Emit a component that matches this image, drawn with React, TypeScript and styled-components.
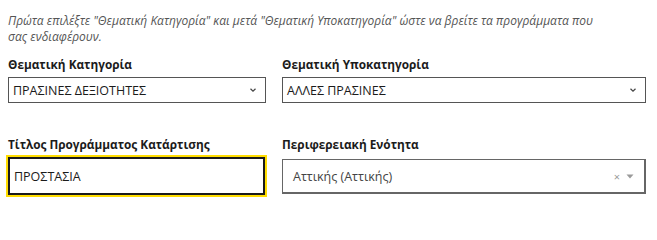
import styled, { createGlobalStyle } from 'styled-components'

const GlobalStyle = createGlobalStyle`
  body {
    margin: 0;
    background: #ffffff;
    font-family: 'Open Sans', 'Noto Sans', sans-serif;
    color: #1b1b1b;
  }
`

const Page = styled.div`
  padding: 8px 11px 0 8px;
`

const Hint = styled.p`
  margin: 5px 0 0;
  max-width: 590px;
  font-size: 12px;
  line-height: 16px;
  font-style: italic;
  color: #555555;
`

const Grid = styled.div`
  display: grid;
  grid-template-columns: 258px 1fr;
  column-gap: 16px;
  row-gap: 33px;
  margin-top: 11px;
`

const Field = styled.div`
  display: flex;
  flex-direction: column;
`

const Label = styled.label`
  font-size: 11.8px;
  font-weight: 700;
  line-height: 16px;
  margin-bottom: 5px;
  color: #1b1b1b;
`

const SelectBox = styled.div`
  height: 26px;
  border: 1px solid #555555;
  display: flex;
  align-items: center;
  justify-content: space-between;
  padding: 0 8px 0 4px;
  font-size: 12.5px;
  color: #1b1b1b;
  box-sizing: border-box;
`

const Chevron = styled.span`
  display: flex;
  color: #333;
`

const InputFrame = styled.div`
  border: 2px solid #ffdd00;
  margin: -2px 0 0 -2px;
  width: calc(100% + 3px);
  box-sizing: border-box;
`

const TextInput = styled.div`
  height: 38px;
  border: 2px solid #1b1b1b;
  display: flex;
  align-items: center;
  padding-left: 4px;
  font-size: 12.5px;
  box-sizing: border-box;
`

const ComboBox = styled.div`
  height: 35px;
  margin-top: 2px;
  border: 1px solid #666666;
  border-right-width: 2px;
  border-bottom-width: 2px;
  display: flex;
  align-items: center;
  padding: 0 10px 0 10px;
  box-sizing: border-box;
`

const ComboValue = styled.span`
  flex: 1;
  font-size: 12.5px;
  color: #444444;
`

const ComboIcons = styled.span`
  display: flex;
  align-items: center;
  gap: 6px;
  color: #999999;
  font-size: 11px;
`

const ChevronIcon = () => (
  <svg width="8" height="6" viewBox="0 0 8 6">
    <path d="M1.5 1.8 L4 4.2 L6.5 1.8" fill="none" stroke="#444" strokeWidth="1.2" />
  </svg>
)

const Caret = () => (
  <svg width="8" height="5" viewBox="0 0 8 5">
    <path d="M0.5 0.5 L7.5 0.5 L4 4.5 Z" fill="#9a9a9a" />
  </svg>
)

function App() {
  return (
    <Page>
      <GlobalStyle />
      <Hint>
        Πρώτα επιλέξτε "Θεματική Κατηγορία" και μετά "Θεματική Υποκατηγορία" ώστε να βρείτε τα
        προγράμματα που σας ενδιαφέρουν.
      </Hint>
      <Grid>
        <Field>
          <Label>Θεματική Κατηγορία</Label>
          <SelectBox>
            ΠΡΑΣΙΝΕΣ ΔΕΞΙΟΤΗΤΕΣ
            <Chevron>
              <ChevronIcon />
            </Chevron>
          </SelectBox>
        </Field>
        <Field>
          <Label>Θεματική Υποκατηγορία</Label>
          <SelectBox>
            ΑΛΛΕΣ ΠΡΑΣΙΝΕΣ
            <Chevron>
              <ChevronIcon />
            </Chevron>
          </SelectBox>
        </Field>
        <Field>
          <Label>Τίτλος Προγράμματος Κατάρτισης</Label>
          <InputFrame>
            <TextInput>ΠΡΟΣΤΑΣΙΑ</TextInput>
          </InputFrame>
        </Field>
        <Field>
          <Label>Περιφερειακή Ενότητα</Label>
          <ComboBox>
            <ComboValue>Αττικής (Αττικής)</ComboValue>
            <ComboIcons>
              <span>×</span>
              <Caret />
            </ComboIcons>
          </ComboBox>
        </Field>
      </Grid>
    </Page>
  )
}

export default App
